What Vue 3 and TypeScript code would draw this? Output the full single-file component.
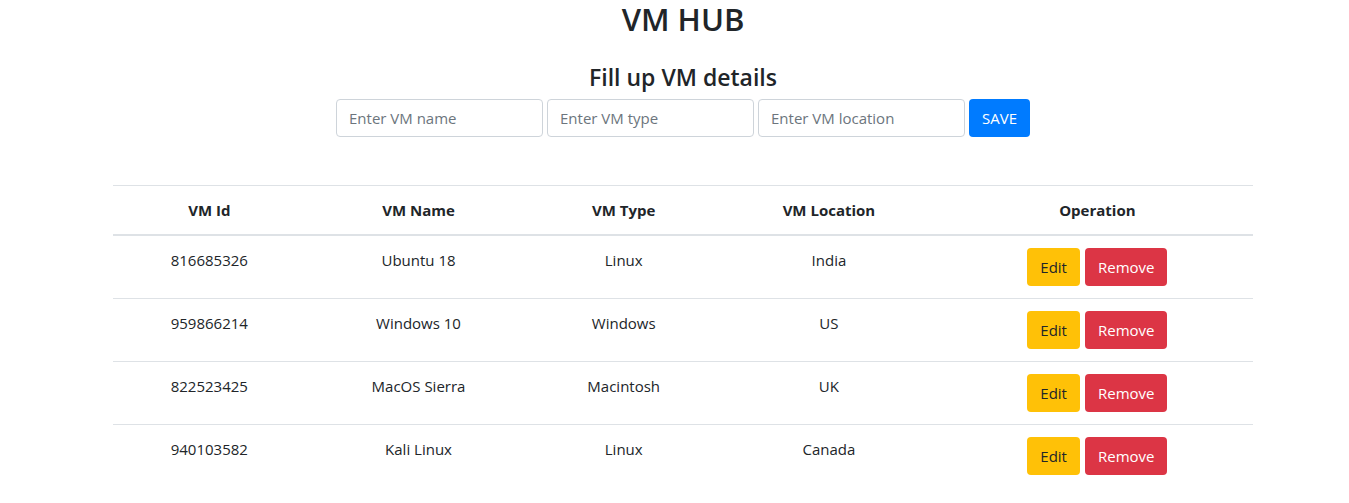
<script setup lang="ts">
import { reactive, ref } from 'vue'

interface Machine {
  id: number
  name: string
  type: string
  location: string
}

const machines = ref<Machine[]>([
  { id: 816685326, name: 'Ubuntu 18', type: 'Linux', location: 'India' },
  { id: 959866214, name: 'Windows 10', type: 'Windows', location: 'US' },
  { id: 822523425, name: 'MacOS Sierra', type: 'Macintosh', location: 'UK' },
  { id: 940103582, name: 'Kali Linux', type: 'Linux', location: 'Canada' },
])

const form = reactive({ name: '', type: '', location: '' })
const editingId = ref<number | null>(null)

function save() {
  if (!form.name) return
  const current = machines.value.find((m) => m.id === editingId.value)
  if (current) {
    Object.assign(current, form)
  } else {
    machines.value.push({ id: Math.floor(Math.random() * 1e9), ...form })
  }
  editingId.value = null
  Object.assign(form, { name: '', type: '', location: '' })
}

function edit(m: Machine) {
  editingId.value = m.id
  Object.assign(form, { name: m.name, type: m.type, location: m.location })
}

function remove(id: number) {
  machines.value = machines.value.filter((m) => m.id !== id)
}
</script>

<template>
  <div class="page">
    <main class="container">
      <h1>VM HUB</h1>
      <h2>Fill up VM details</h2>
      <form class="vm-form" @submit.prevent="save">
        <input v-model="form.name" type="text" aria-label="VM name" placeholder="Enter VM name" />
        <input v-model="form.type" type="text" aria-label="VM type" placeholder="Enter VM type" />
        <input v-model="form.location" type="text" aria-label="VM location" placeholder="Enter VM location" />
        <button class="btn primary" type="submit">SAVE</button>
      </form>
      <table>
        <colgroup>
          <col class="col-id" />
          <col class="col-name" />
          <col class="col-type" />
          <col class="col-location" />
          <col />
        </colgroup>
        <thead>
          <tr>
            <th scope="col">VM Id</th>
            <th scope="col">VM Name</th>
            <th scope="col">VM Type</th>
            <th scope="col">VM Location</th>
            <th scope="col">Operation</th>
          </tr>
        </thead>
        <tbody>
          <tr v-for="m in machines" :key="m.id">
            <td>{{ m.id }}</td>
            <td>{{ m.name }}</td>
            <td>{{ m.type }}</td>
            <td>{{ m.location }}</td>
            <td>
              <div class="actions">
                <button class="btn warning" type="button" @click="edit(m)">Edit</button>
                <button class="btn danger" type="button" @click="remove(m.id)">Remove</button>
              </div>
            </td>
          </tr>
        </tbody>
      </table>
    </main>
  </div>
</template>

<style>
body {
  background: #fff;
}
</style>

<style scoped>
.page {
  padding-left: 17px;
}
.container {
  max-width: 1140px;
  margin: 0 auto;
  font-family: 'Segoe UI', 'Open Sans', 'Noto Sans', sans-serif;
  font-size: 15px;
  line-height: 24px;
  color: #212529;
  text-align: center;
}
h1 {
  margin: 0 0 24px;
  font-size: 31px;
  font-weight: 600;
  line-height: 39px;
}
h2 {
  margin: 0 0 8px;
  font-size: 23px;
  font-weight: 600;
  line-height: 28px;
}
.vm-form {
  display: flex;
  flex-wrap: wrap;
  justify-content: center;
  gap: 4px;
  margin-bottom: 48px;
}
input {
  box-sizing: border-box;
  width: 207px;
  height: 38px;
  padding: 6px 12px;
  border: 1px solid #ced4da;
  border-radius: 4px;
  background: #fff;
  color: #495057;
  font: inherit;
}
input::placeholder {
  color: #6c757d;
  opacity: 1;
}
.btn {
  height: 38px;
  padding: 0 13px;
  border: 0;
  border-radius: 4px;
  font: inherit;
  cursor: pointer;
}
.primary {
  background: #007bff;
  color: #fff;
}
.warning {
  background: #ffc107;
  color: #212529;
}
.danger {
  background: #dc3545;
  color: #fff;
}
table {
  width: 100%;
  table-layout: fixed;
  border-collapse: collapse;
}
.col-id {
  width: 16.9%;
}
.col-name,
.col-location {
  width: 19.8%;
}
.col-type {
  width: 16.2%;
}
th,
td {
  padding: 12px;
  border-top: 1px solid #dee2e6;
  vertical-align: top;
}
th {
  border-bottom: 2px solid #dee2e6;
  font-weight: 700;
}
.actions {
  display: flex;
  justify-content: center;
  gap: 5px;
}
</style>
